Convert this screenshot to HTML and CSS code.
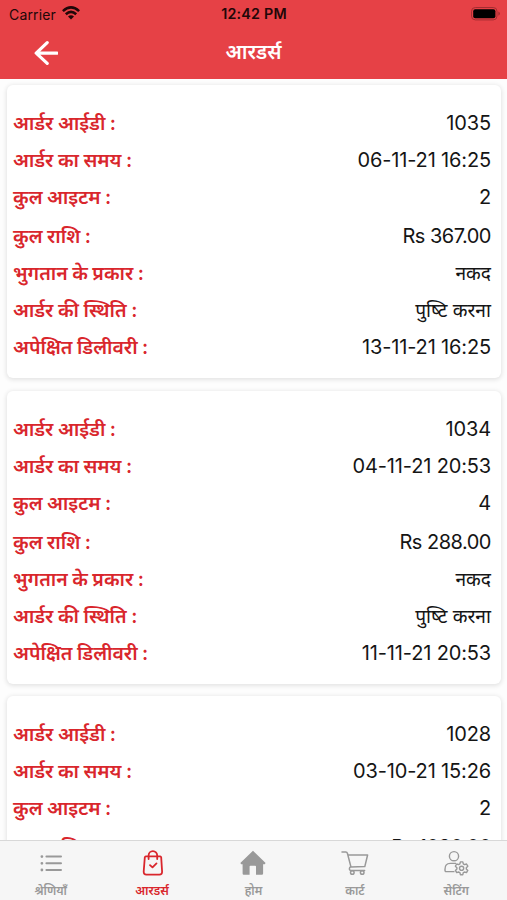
FILE: index.html
```html
<!DOCTYPE html>
<html lang="hi">
<head>
<meta charset="utf-8">
<title>आरडर्स</title>
<link rel="stylesheet" href="styles.css">
</head>
<body>
<div class="app">
  <header class="header">
    <div class="status">
      <div class="carrier"><span>Carrier</span>
        <svg class="wifi" width="18" height="14" viewBox="0 0 18 14"><g fill="none" stroke="#210708" stroke-width="2.6"><path d="M.9 5.1Q9-2.2 17.1 5.1"/><path d="M3.8 8.3Q9 3.6 14.2 8.3"/></g><path d="M6 10.4Q9 8 12 10.4L9 13.6Z" fill="#210708"/></svg>
      </div>
      <span class="time">12:42 PM</span>
      <svg class="battery" width="30" height="14" viewBox="0 0 30 14"><rect x=".5" y=".5" width="25.5" height="12.4" rx="3.8" fill="none" stroke="#a42d31"/><rect x="2.2" y="2.2" width="22.2" height="9" rx="2" fill="#000"/><path d="M27.5 4.6Q30 6.7 27.5 8.8Z" fill="#8f272b"/></svg>
    </div>
    <div class="navbar">
      <svg class="back" width="26" height="26" viewBox="0 0 26 26"><path d="M15.2 2.6 4.2 13.2 15.2 23.4M4.4 13.2H25" fill="none" stroke="#fff" stroke-width="3.2" stroke-linecap="round" stroke-linejoin="round"/></svg>
      <h1 class="title">आरडर्स</h1>
    </div>
  </header>
  <main class="orders">
    <section class="card">
      <div class="row"><b>आर्डर आईडी :</b><span>1035</span></div>
      <div class="row"><b>आर्डर का समय :</b><span>06-11-21 16:25</span></div>
      <div class="row"><b>कुल आइटम :</b><span>2</span></div>
      <div class="row amount"><b>कुल राशि :</b><span>Rs 367.00</span></div>
      <div class="row"><b>भुगतान के प्रकार :</b><span class="hi">नकद</span></div>
      <div class="row"><b>आर्डर की स्थिति :</b><span class="hi">पुष्&zwj;टि करना</span></div>
      <div class="row"><b>अपेक्षित डिलीवरी :</b><span>13-11-21 16:25</span></div>
    </section>
    <section class="card">
      <div class="row"><b>आर्डर आईडी :</b><span>1034</span></div>
      <div class="row"><b>आर्डर का समय :</b><span>04-11-21 20:53</span></div>
      <div class="row"><b>कुल आइटम :</b><span>4</span></div>
      <div class="row amount"><b>कुल राशि :</b><span>Rs 288.00</span></div>
      <div class="row"><b>भुगतान के प्रकार :</b><span class="hi">नकद</span></div>
      <div class="row"><b>आर्डर की स्थिति :</b><span class="hi">पुष्&zwj;टि करना</span></div>
      <div class="row"><b>अपेक्षित डिलीवरी :</b><span>11-11-21 20:53</span></div>
    </section>
    <section class="card">
      <div class="row"><b>आर्डर आईडी :</b><span>1028</span></div>
      <div class="row"><b>आर्डर का समय :</b><span>03-10-21 15:26</span></div>
      <div class="row"><b>कुल आइटम :</b><span>2</span></div>
      <div class="row amount"><b>कुल राशि :</b><span>Rs 1090.00</span></div>
    </section>
  </main>
  <nav class="tabs">
    <a class="tab"><svg width="28" height="28" viewBox="0 0 28 28"><g fill="none" stroke="#999" stroke-width="2" stroke-linecap="round"><path d="M9.4 7.6H24M9.4 14.3H24M9.4 21H24"/><path stroke-width="2.8" d="M4.9 7.6h.01M4.9 14.3h.01M4.9 21h.01"/></g></svg><span>श्रेणियाँ</span></a>
    <a class="tab active"><svg width="28" height="28" viewBox="0 0 28 28"><g fill="none" stroke="#d9262c" stroke-width="1.8" stroke-linecap="round" stroke-linejoin="round"><path d="M7.8 7.4H22.2Q23 7.4 23.2 8.5L24.1 22.5Q24.2 25.6 21.4 25.6H8.4Q5.6 25.6 5.7 22.5L6.8 8.5Q7 7.4 7.8 7.4Z"/><path d="M10.6 10V6.5A4.3 4.3 0 0 1 19.2 6.5V10"/><path d="m12 16.1 2.5 2.3 4-4"/></g></svg><span>आरडर्स</span></a>
    <a class="tab"><svg width="28" height="28" viewBox="0 0 28 28"><path d="M14 1.8 1.3 13.9 2.2 15.3H3.6V24.6Q3.6 25.8 4.8 25.8H10.6V17.5Q10.6 16.7 11.4 16.7H16.2Q17 16.7 17 17.5V25.8H22.9Q24.1 25.8 24.1 24.6V15.3H25.7L26.6 13.9Z" fill="#999"/></svg><span>होम</span></a>
    <a class="tab"><svg width="28" height="28" viewBox="0 0 28 28"><g fill="none" stroke="#999" stroke-width="1.5" stroke-linejoin="round" stroke-linecap="round"><path d="M1 3H4.8Q6 3 6.4 4.2L10 18.1M6.9 6H26.6L23.8 17.6 9.9 18.1Q8.4 18.1 8.4 19.8T10 21.4H23.6"/><circle cx="11.3" cy="23.5" r="1.8"/><circle cx="21.2" cy="23.5" r="1.8"/></g></svg><span>कार्ट</span></a>
    <a class="tab"><svg width="28" height="28" viewBox="0 0 28 28"><g fill="none" stroke="#999" stroke-width="1.4" stroke-linejoin="round"><circle cx="12" cy="7.2" r="4.6"/><path d="M12.5 22.6H4.1Q3 22.6 3 21.2V20.2Q3 14.4 8.2 14.4H14"/><path d="m18.4 12.9h2.4l.5 2 1.2.7 2-.6 1.3 2.2-1.5 1.5v1.2l1.5 1.5-1.3 2.2-2-.6-1.2.7-.5 2h-2.4l-.5-2-1.2-.7-2 .6-1.3-2.2 1.5-1.5v-1.2l-1.5-1.5 1.3-2.2 2 .6 1.2-.7Z"/><circle cx="19.6" cy="19.3" r="2.1"/></g></svg><span>सेटिंग</span></a>
  </nav>
</div>
</body>
</html>
```
FILE: styles.css
```css
* { box-sizing: border-box; }
body { margin: 0; font-family: Inter, "Noto Sans", "Noto Sans Devanagari", sans-serif; }
.app { height: 900px; display: flex; flex-direction: column; overflow: hidden; background: #fdfdfd; }
.header { flex: none; height: 79px; background: #e64146; }
.status { height: 28px; display: grid; grid-template-columns: 1fr auto 1fr; align-items: center; padding: 0 6px 0 9px; color: #210708; font-size: 14px; }
.carrier { display: flex; align-items: center; gap: 6px; letter-spacing: .15px; }
.wifi { margin-top: -2px; }
.time { margin: -1px 2px 0 0; font-weight: 600; letter-spacing: .2px; font-size: 14.3px; }
.battery { justify-self: end; margin-top: -1px; }
.navbar { height: 48px; display: grid; grid-template-columns: 1fr auto 1fr; align-items: center; padding: 0 32px; }
.title { margin: 0; color: #fff; font-size: 20px; font-weight: 600; line-height: 49px; }
.orders { flex: 1; min-height: 0; overflow: hidden; display: flex; flex-direction: column; gap: 12.5px; padding: 6px 6px 0 7px; }
.card { flex: none; height: 293px; padding: 20px 10px 0 6px; border-radius: 6px; background: #fff; box-shadow: 0 1px 4px 1px rgba(0, 0, 0, .1); }
.row { height: 37px; display: flex; justify-content: space-between; align-items: flex-end; line-height: 37px; font-size: 20px; letter-spacing: -.15px; color: #151515; white-space: nowrap; }
.amount { height: 39.4px; letter-spacing: -.5px; }
.row b { color: #d9262c; font-size: 19.4px; font-weight: 600; letter-spacing: 0; word-spacing: -.4px; }
.row .hi { font-size: 19.2px; letter-spacing: 0; }
.tabs { flex: none; height: 60px; display: grid; grid-template-columns: repeat(5, 1fr); border-top: 1px solid #d8d8d8; background: #f6f6f6; }
.tab { display: flex; flex-direction: column; align-items: center; padding-top: 8px; color: #999; font-size: 12px; font-weight: 600; line-height: 27px; }
.tab svg { flex: none; }
.active { color: #d9262c; }
```
